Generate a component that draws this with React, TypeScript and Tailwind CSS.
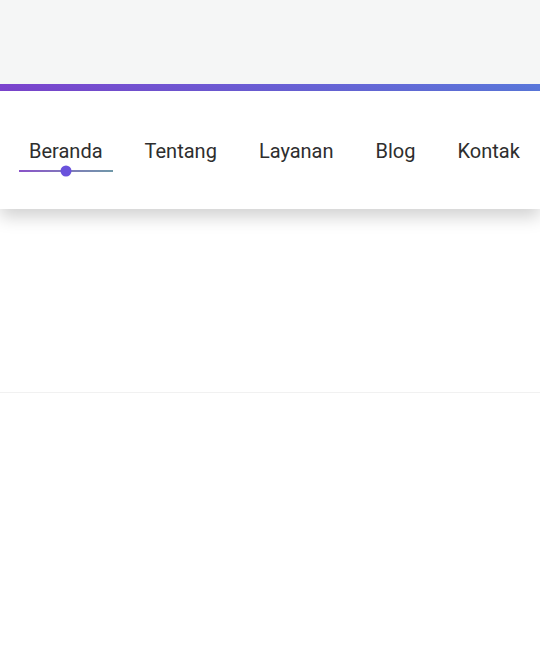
export default function App() {
  const items = ["Beranda", "Tentang", "Layanan", "Blog", "Kontak"]
  return (
    <div className="w-[540px] h-[648px] bg-white overflow-hidden" style={{ fontFamily: "Roboto, sans-serif" }}>
      <div className="h-[84px] bg-[#f5f6f6]" />
      <div className="h-[7px] bg-gradient-to-r from-[#7c44cf] via-[#6a5fd6] to-[#5a78dc]" />
      <nav className="h-[118px] bg-white shadow-[0_8px_16px_rgba(0,0,0,0.18)] relative z-10 flex items-start pt-[48px] pl-[19px] gap-[22px]">
        {items.map((item, i) => (
          <div key={item} className="flex flex-col">
            <span className="px-[10px] text-[20px] leading-[24px] text-[#2e2e2e]">{item}</span>
            {i === 0 && (
              <div className="relative h-[2px] mt-[7px] bg-gradient-to-r from-[#8a52c9] to-[#6f98a8]">
                <div className="absolute left-1/2 top-1/2 -translate-x-1/2 -translate-y-1/2 w-[11px] h-[11px] rounded-full bg-[#6a52dc]" />
              </div>
            )}
          </div>
        ))}
      </nav>
      <div className="h-[183px]" />
      <div className="h-px bg-[#f1f1f1]" />
    </div>
  )
}
